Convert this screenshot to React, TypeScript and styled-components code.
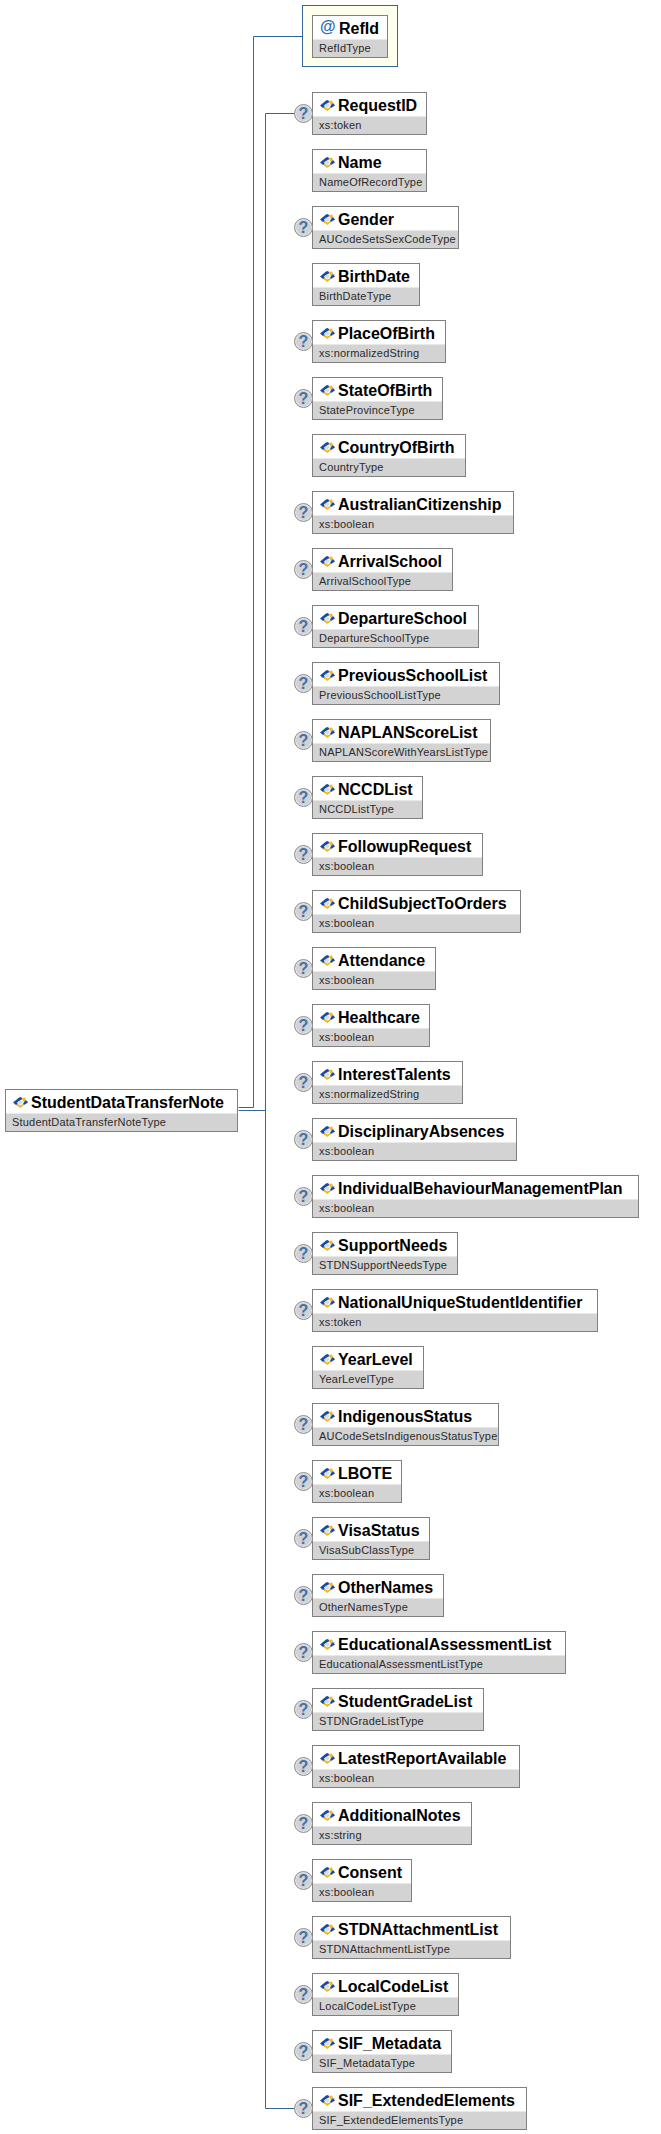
import React from 'react';
import styled, { createGlobalStyle } from 'styled-components';

interface Item {
  name: string,
  type: string,
  width: number,
  required?: boolean
}

const items: Item[] = [
  { name: 'RequestID', type: 'xs:token', width: 115 },
  { name: 'Name', type: 'NameOfRecordType', width: 115, required: true },
  { name: 'Gender', type: 'AUCodeSetsSexCodeType', width: 147 },
  { name: 'BirthDate', type: 'BirthDateType', width: 108, required: true },
  { name: 'PlaceOfBirth', type: 'xs:normalizedString', width: 134 },
  { name: 'StateOfBirth', type: 'StateProvinceType', width: 131 },
  { name: 'CountryOfBirth', type: 'CountryType', width: 154, required: true },
  { name: 'AustralianCitizenship', type: 'xs:boolean', width: 202 },
  { name: 'ArrivalSchool', type: 'ArrivalSchoolType', width: 141 },
  { name: 'DepartureSchool', type: 'DepartureSchoolType', width: 167 },
  { name: 'PreviousSchoolList', type: 'PreviousSchoolListType', width: 188 },
  { name: 'NAPLANScoreList', type: 'NAPLANScoreWithYearsListType', width: 179 },
  { name: 'NCCDList', type: 'NCCDListType', width: 111 },
  { name: 'FollowupRequest', type: 'xs:boolean', width: 171 },
  { name: 'ChildSubjectToOrders', type: 'xs:boolean', width: 209 },
  { name: 'Attendance', type: 'xs:boolean', width: 124 },
  { name: 'Healthcare', type: 'xs:boolean', width: 118 },
  { name: 'InterestTalents', type: 'xs:normalizedString', width: 151 },
  { name: 'DisciplinaryAbsences', type: 'xs:boolean', width: 205 },
  { name: 'IndividualBehaviourManagementPlan', type: 'xs:boolean', width: 327 },
  { name: 'SupportNeeds', type: 'STDNSupportNeedsType', width: 146 },
  { name: 'NationalUniqueStudentIdentifier', type: 'xs:token', width: 286 },
  { name: 'YearLevel', type: 'YearLevelType', width: 112, required: true },
  { name: 'IndigenousStatus', type: 'AUCodeSetsIndigenousStatusType', width: 187 },
  { name: 'LBOTE', type: 'xs:boolean', width: 90 },
  { name: 'VisaStatus', type: 'VisaSubClassType', width: 118 },
  { name: 'OtherNames', type: 'OtherNamesType', width: 132 },
  { name: 'EducationalAssessmentList', type: 'EducationalAssessmentListType', width: 254 },
  { name: 'StudentGradeList', type: 'STDNGradeListType', width: 172 },
  { name: 'LatestReportAvailable', type: 'xs:boolean', width: 208 },
  { name: 'AdditionalNotes', type: 'xs:string', width: 160 },
  { name: 'Consent', type: 'xs:boolean', width: 100 },
  { name: 'STDNAttachmentList', type: 'STDNAttachmentListType', width: 199 },
  { name: 'LocalCodeList', type: 'LocalCodeListType', width: 147 },
  { name: 'SIF_Metadata', type: 'SIF_MetadataType', width: 140 },
  { name: 'SIF_ExtendedElements', type: 'SIF_ExtendedElementsType', width: 215 }
];

const ElementIcon: React.FC = () => (
  <IconSvg viewBox="0 0 15 11" width="15" height="11">
    <polygon points="0,5.5 6,0.5 8,0 9.5,2 4,5.5 5,7.5 3,8" fill="#1d4d9a" />
    <polygon points="3,8 5,7 7.5,8.5 10,7 11,8 7.5,11" fill="#f5b81f" />
    <polygon points="9,1 12,0.5 13,3 11,5 9.5,3" fill="#f5b81f" />
    <polygon points="11,5 13,3 15,5.5 11,8 10,7" fill="#1d4d9a" />
    <polygon points="4,5.5 7.5,3 10,5 7.5,8" fill="#cfdff0" />
  </IconSvg>
);

const ElementBox: React.FC<{ name: string, type: string, width: number }> = ({ name, type, width }) => (
  <Box $width={width}>
    <BoxTitle>
      <ElementIcon />
      <Name>{name}</Name>
    </BoxTitle>
    <BoxType>{type}</BoxType>
  </Box>
);

const App: React.FC = () => (
  <>
    <GlobalStyle />
    <Page>
      <Connectors width="661" height="2134">
        <polyline points="238.5,1107.5 253.5,1107.5 253.5,36.5 302,36.5" />
        <polyline points="238.5,1110.5 265.5,1110.5" />
        <polyline points="295,113.5 265.5,113.5 265.5,2108.5 295,2108.5" />
      </Connectors>
      <RootColumn>
        <ElementBox name="StudentDataTransferNote" type="StudentDataTransferNoteType" width={233} />
      </RootColumn>
      <TreeColumn>
        <AttributeGroup>
          <Box $width={76}>
            <BoxTitle>
              <AtSign>@</AtSign>
              <Name>RefId</Name>
            </BoxTitle>
            <BoxType>RefIdType</BoxType>
          </Box>
        </AttributeGroup>
        <Rows>
          {items.map((item) => (
            <Row key={item.name}>
              {!item.required && <Optional>?</Optional>}
              <BoxCell>
                <ElementBox name={item.name} type={item.type} width={item.width} />
              </BoxCell>
            </Row>
          ))}
        </Rows>
      </TreeColumn>
    </Page>
  </>
);

const GlobalStyle = createGlobalStyle`
  html, body {
    margin: 0;
    padding: 0;
    background: #fff;
  }
`;

const Page = styled.div`
  position: relative;
  display: flex;
  width: 661px;
  height: 2134px;
  overflow: hidden;
  font-family: "Liberation Sans", Arial, sans-serif;
`;

const Connectors = styled.svg`
  position: absolute;
  top: 0;
  left: 0;

  polyline {
    fill: none;
    stroke: #336699;
    stroke-width: 1;
  }
`;

const RootColumn = styled.div`
  position: relative;
  padding: 1089px 0 0 5px;
`;

const TreeColumn = styled.div`
  position: relative;
  padding: 5px 0 0 56px;
`;

const AttributeGroup = styled.div`
  box-sizing: border-box;
  width: 96px;
  height: 62px;
  margin-left: 8px;
  padding: 9px;
  border: 1px solid #336699;
  background: #ffffee;
`;

const Rows = styled.div`
  display: flex;
  flex-direction: column;
  gap: 14px;
  margin-top: 25px;
`;

const Row = styled.div`
  display: grid;
  grid-template-columns: 18px auto;
  align-items: center;
  height: 43px;
`;

const BoxCell = styled.div`
  grid-column: 2;
  grid-row: 1;
`;

const Optional = styled.div`
  grid-column: 1 / span 1;
  grid-row: 1;
  z-index: 1;
  box-sizing: border-box;
  width: 19px;
  height: 19px;
  border: 1px solid #8f8f8f;
  border-radius: 50%;
  background: #d2d2d4;
  box-shadow: inset 0 0 0 1px #e6e6e6;
  color: #3f72ab;
  font-size: 16px;
  font-weight: 700;
  line-height: 17px;
  text-align: center;
`;

const Box = styled.div<{ $width: number }>`
  box-sizing: border-box;
  display: flex;
  flex-direction: column;
  width: ${(props) => props.$width}px;
  height: 43px;
  border: 1px solid #808080;
  background: #fff;
`;

const BoxTitle = styled.div`
  box-sizing: border-box;
  display: flex;
  align-items: center;
  height: 23px;
  padding: 3px 0 0 7px;
`;

const IconSvg = styled.svg`
  flex: none;
  margin-top: -2px;
`;

const AtSign = styled.span`
  flex: none;
  width: 16px;
  margin: -5px 0 0 0;
  color: #2f6cb0;
  font-size: 16px;
  font-weight: 700;
`;

const Name = styled.span`
  margin-left: 3px;
  color: #000;
  font-size: 16px;
  font-weight: 700;
  white-space: nowrap;
`;

const BoxType = styled.div`
  flex: 1;
  padding-left: 6px;
  border-top: 1px solid #e8e8e8;
  background: #d3d3d3;
  color: #2a2a2a;
  font-size: 11px;
  letter-spacing: 0.2px;
  line-height: 17px;
  white-space: nowrap;
`;

export default App;
